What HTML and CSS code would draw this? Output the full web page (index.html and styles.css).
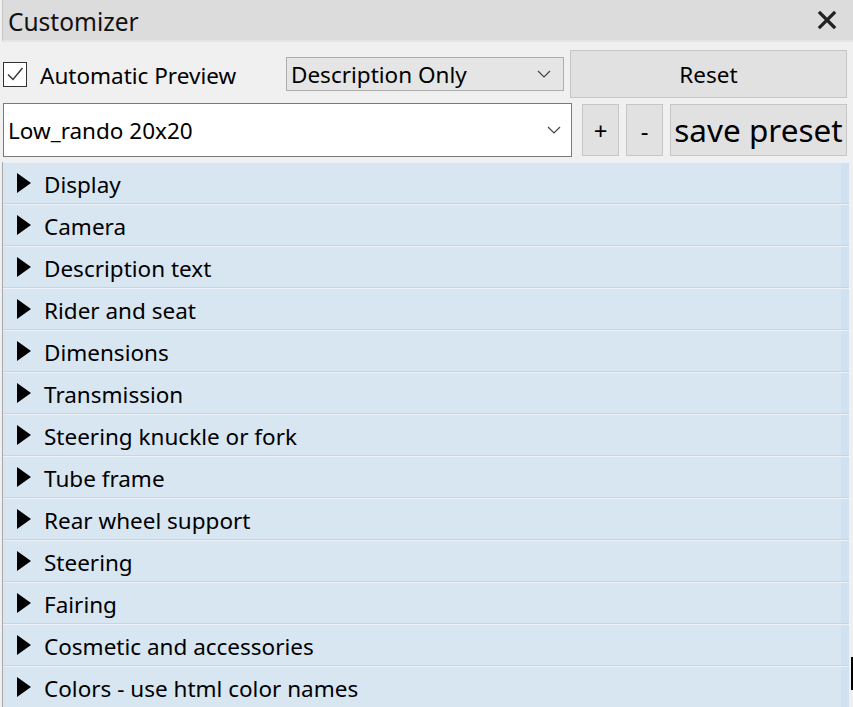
FILE: index.html
```html
<!DOCTYPE html>
<html>
<head>
<meta charset="utf-8">
<link rel="stylesheet" href="styles.css">
</head>
<body>
<div class="window">
  <div class="titlebar">
    <span class="title">Customizer</span>
    <svg class="close" width="20" height="20" viewBox="0 0 20 20"><path d="M3 3 L17 17 M17 3 L3 17" stroke="#222" stroke-width="3.2" stroke-linecap="square"/></svg>
  </div>
  <div class="row1">
    <label class="check">
      <span class="box"><svg width="22" height="22" viewBox="0 0 22 22"><path d="M4 11.5 L9 16.5 L18.5 5" fill="none" stroke="#333" stroke-width="1.4"/></svg></span>
      <span class="check-text">Automatic Preview</span>
    </label>
    <div class="select">
      <span>Description Only</span>
      <svg class="chev" width="14" height="8" viewBox="0 0 14 8"><path d="M1 1 L7 7 L13 1" fill="none" stroke="#444" stroke-width="1.2"/></svg>
    </div>
    <div class="btn reset">Reset</div>
  </div>
  <div class="row2">
    <div class="combo">
      <span>Low_rando 20x20</span>
      <svg class="chev" width="14" height="8" viewBox="0 0 14 8"><path d="M1 1 L7 7 L13 1" fill="none" stroke="#444" stroke-width="1.2"/></svg>
    </div>
    <div class="btn small">+</div>
    <div class="btn small">-</div>
    <div class="btn save">save preset</div>
  </div>
  <div class="list">
    <div class="item"><span class="tri"></span><span class="lbl">Display</span></div>
    <div class="item"><span class="tri"></span><span class="lbl">Camera</span></div>
    <div class="item"><span class="tri"></span><span class="lbl">Description text</span></div>
    <div class="item"><span class="tri"></span><span class="lbl">Rider and seat</span></div>
    <div class="item"><span class="tri"></span><span class="lbl">Dimensions</span></div>
    <div class="item"><span class="tri"></span><span class="lbl">Transmission</span></div>
    <div class="item"><span class="tri"></span><span class="lbl">Steering knuckle or fork</span></div>
    <div class="item"><span class="tri"></span><span class="lbl">Tube frame</span></div>
    <div class="item"><span class="tri"></span><span class="lbl">Rear wheel support</span></div>
    <div class="item"><span class="tri"></span><span class="lbl">Steering</span></div>
    <div class="item"><span class="tri"></span><span class="lbl">Fairing</span></div>
    <div class="item"><span class="tri"></span><span class="lbl">Cosmetic and accessories</span></div>
    <div class="item"><span class="tri"></span><span class="lbl">Colors - use html color names</span></div>
  </div>
  <div class="cursor"></div>
</div>
</body>
</html>
```
FILE: styles.css
```css
html, body {
  margin: 0;
  padding: 0;
  background: #f0f0f0;
  overflow: hidden;
}
body {
  font-family: "Noto Sans", "DejaVu Sans", sans-serif;
  font-size: 22.5px;
  color: #000;
  width: 853px;
  height: 707px;
}
.window {
  position: relative;
  height: 707px;
}
.titlebar {
  margin-left: 2px;
  height: 40px;
  background: #dcdcdc;
  border-left: 1px solid #c4c4c4;
  border-bottom: 2px solid #e6e6e6;
  display: flex;
  align-items: center;
  justify-content: space-between;
  padding: 0 16px 0 5px;
}
.title {
  font-size: 24.5px;
  color: #111;
  padding-top: 3px;
}
.close {
  display: block;
}
.row1 {
  display: flex;
  align-items: center;
  margin-top: 8px;
  height: 48px;
}
.check {
  display: flex;
  align-items: center;
  width: 286px;
  padding-left: 3px;
  box-sizing: border-box;
}
.box {
  width: 22px;
  height: 23px;
  border: 1px solid #333;
  background: #fff;
  display: flex;
  align-items: center;
  justify-content: center;
  margin-right: 13px;
}
.box svg {
  display: block;
}
.check-text {
  padding-top: 2px;
}
.select {
  width: 278px;
  height: 34px;
  box-sizing: border-box;
  border: 1px solid #adadad;
  background: #e5e5e5;
  display: flex;
  align-items: center;
  justify-content: space-between;
  padding: 0 12px 0 4px;
  margin-right: 6px;
}
.btn {
  box-sizing: border-box;
  background: #e1e1e1;
  border: 1px solid #c6c6c6;
  display: flex;
  align-items: center;
  justify-content: center;
}
.reset {
  width: 277px;
  height: 48px;
}
.row2 {
  display: flex;
  align-items: center;
  margin-top: 5px;
  height: 54px;
}
.combo {
  margin-left: 3px;
  width: 569px;
  height: 54px;
  box-sizing: border-box;
  border: 1px solid #7a7a7a;
  background: #fff;
  display: flex;
  align-items: center;
  justify-content: space-between;
  padding: 0 10px 0 4px;
  margin-right: 10px;
}
.small {
  width: 37px;
  height: 52px;
  margin-right: 7px;
  font-size: 24px;
}
.save {
  width: 177px;
  height: 52px;
  font-size: 31.5px;
  padding-bottom: 2px;
  white-space: nowrap;
}
.list {
  margin-top: 5px;
  margin-left: 2px;
  width: 846px;
  border-left: 1px solid #a8a8a8;
}
.item {
  height: 42px;
  box-sizing: border-box;
  background: linear-gradient(to right, #d8e6f2 0, #d8e6f2 838px, #d0e1f1 838px);
  border-top: 1px solid #eaf1f8;
  border-bottom: 1px solid #c3d6e8;
  display: flex;
  align-items: center;
  padding-left: 14px;
}
.lbl {
  padding-top: 3px;
}
.tri {
  width: 0;
  height: 0;
  border-top: 10px solid transparent;
  border-bottom: 10px solid transparent;
  border-left: 14px solid #000;
  margin-right: 13px;
}
.cursor {
  position: absolute;
  left: 851px;
  top: 657px;
  width: 2px;
  height: 33px;
  background: #000;
}
```
